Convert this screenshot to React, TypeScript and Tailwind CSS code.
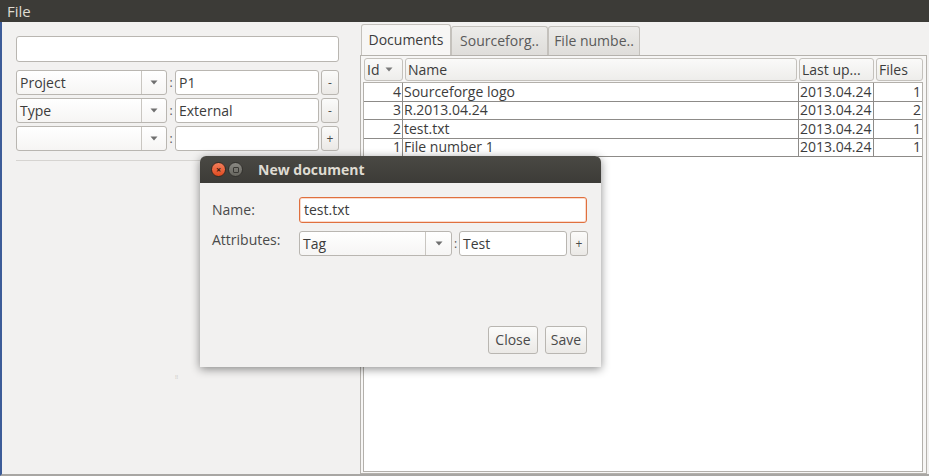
import React from "react";

const font = { fontFamily: '"Open Sans", "Noto Sans", "DejaVu Sans", sans-serif' };

function Arrow() {
  return (
    <svg width="8" height="5" viewBox="0 0 8 5">
      <path d="M0.5 0.5 L7.5 0.5 L4 4.5 Z" fill="#6f6f6f" />
    </svg>
  );
}

function Combo({ label, w, arrowW = 25 }: { label: string; w: number; arrowW?: number }) {
  return (
    <div
      className="flex h-[25px] rounded-[3px] border border-[#b9b6b1] bg-gradient-to-b from-white to-[#f6f5f4] overflow-hidden shrink-0"
      style={{ width: w }}
    >
      <div className="flex-1 flex items-center pl-[3px] text-[14px] text-[#3c3c3c] leading-none">{label}</div>
      <div className="flex items-center justify-center border-l border-[#c9c6c1]" style={{ width: arrowW }}>
        <Arrow />
      </div>
    </div>
  );
}

function Field({ value, w, className = "" }: { value: string; w: number; className?: string }) {
  return (
    <div
      className={`flex items-center h-[25px] rounded-[3px] border border-[#b9b6b1] bg-white pl-[3px] text-[14px] text-[#3c3c3c] leading-none shrink-0 ${className}`}
      style={{ width: w }}
    >
      {value}
    </div>
  );
}

function SmallBtn({ t }: { t: string }) {
  return (
    <div className="flex items-center justify-center w-[18px] h-[25px] rounded-[3px] border border-[#b9b6b1] bg-gradient-to-b from-[#fbfbfa] to-[#ebe9e6] text-[12px] text-[#4a4a4a] leading-none shrink-0">
      {t}
    </div>
  );
}

function AttrRow({ k, v, btn }: { k: string; v: string; btn: string }) {
  return (
    <div className="flex items-center">
      <Combo label={k} w={151} />
      <div className="w-[8px] text-center text-[12px] text-[#555] leading-none">:</div>
      <Field value={v} w={144} />
      <div className="w-[2px]" />
      <SmallBtn t={btn} />
    </div>
  );
}

const rows = [
  { id: "4", name: "Sourceforge logo", date: "2013.04.24", files: "1" },
  { id: "3", name: "R.2013.04.24", date: "2013.04.24", files: "2" },
  { id: "2", name: "test.txt", date: "2013.04.24", files: "1" },
  { id: "1", name: "File number 1", date: "2013.04.24", files: "1" },
];

function HeaderCell({ label, w, arrow }: { label: string; w: number; arrow?: boolean }) {
  return (
    <div
      className="flex items-center h-[23px] rounded-[3px] border border-[#c4c1bc] bg-gradient-to-b from-[#fafaf9] to-[#eeedeb] pl-[2px] text-[14px] text-[#3c3c3c] leading-none shrink-0 gap-[6px]"
      style={{ width: w }}
    >
      <span>{label}</span>
      {arrow && (
        <svg width="8" height="5" viewBox="0 0 8 5">
          <path d="M0.5 0.5 L7.5 0.5 L4 4.5 Z" fill="#7a7a7a" />
        </svg>
      )}
    </div>
  );
}

export default function App() {
  return (
    <div className="relative w-[929px] h-[476px] bg-[#f2f1f0] overflow-hidden" style={font}>
      {/* menu bar */}
      <div className="h-[22px] bg-[#3c3b37] flex items-center pl-[7px] text-[15px] text-[#dfdbd2] leading-none">
        File
      </div>
      <div className="flex h-[454px] border-l-2 border-[#3d5c98] border-b-2 border-b-[#a8a6a3]">
        {/* left panel */}
        <div className="w-[358px] shrink-0 pl-[14px] pt-[14px] relative">
          <div className="w-[323px] h-[26px] rounded-[3px] border border-[#b9b6b1] bg-white" />
          <div className="mt-[8px] flex flex-col gap-[3px]">
            <AttrRow k="Project" v="P1" btn="-" />
            <AttrRow k="Type" v="External" btn="-" />
            <AttrRow k="" v="" btn="+" />
          </div>
          <div className="mt-[9px] w-[323px] h-px bg-[#d6d4d1]" />
          <div className="absolute left-[173px] top-[352px] text-[6px] text-[#c8c6c3] leading-none">⁞⁞</div>
        </div>
        {/* right tab pane */}
        <div className="flex-1 flex flex-col pt-[3px] pr-[2px]">
          <div className="flex h-[30px] items-end pl-[1px]">
            <div className="h-[31px] w-[90px] flex items-center justify-center rounded-t-[3px] border border-b-0 border-[#c4c1bc] bg-[#f7f6f5] text-[14px] text-[#3c3c3c] leading-none">
              Documents
            </div>
            <div className="h-[29px] w-[97px] flex items-center justify-center rounded-t-[3px] border border-b-0 border-[#c4c1bc] bg-gradient-to-b from-[#ecebe9] to-[#dfddda] text-[14px] text-[#5a5a5a] leading-none">
              Sourceforg..
            </div>
            <div className="h-[29px] w-[92px] flex items-center justify-center rounded-t-[3px] border border-b-0 border-[#c4c1bc] bg-gradient-to-b from-[#ecebe9] to-[#dfddda] text-[14px] text-[#5a5a5a] leading-none">
              File numbe..
            </div>
          </div>
          <div className="flex-1 border border-[#b5b2ad] bg-[#f7f6f5] flex flex-col pt-[2px] pl-[2px] pr-[3px] pb-[1px]">
            <div className="flex gap-[2px] pl-px">
              <HeaderCell label="Id" w={39} arrow />
              <HeaderCell label="Name" w={392} />
              <HeaderCell label="Last up..." w={75} />
              <HeaderCell label="Files" w={47} />
            </div>
            <div className="flex-1 bg-white border border-[#b3b0ab] mt-[1px]">
              {rows.map((r) => (
                <div key={r.id} className="flex h-[18.5px] border-b border-[#8d8b88] text-[14px] text-[#3c3c3c] leading-none">
                  <div className="w-[39px] border-r border-[#8d8b88] flex items-center justify-end pr-px">{r.id}</div>
                  <div className="w-[396px] border-r border-[#8d8b88] flex items-center pl-px">{r.name}</div>
                  <div className="w-[75px] border-r border-[#8d8b88] flex items-center pl-px">{r.date}</div>
                  <div className="flex-1 flex items-center justify-end pr-px">{r.files}</div>
                </div>
              ))}
            </div>
          </div>
        </div>
      </div>

      {/* dialog */}
      <div className="absolute left-[200px] top-[156px] w-[401px] h-[211px] rounded-t-[6px] bg-[#f2f1f0] shadow-[0_2px_10px_rgba(0,0,0,0.45)] flex flex-col overflow-hidden">
        <div className="h-[27px] bg-gradient-to-b from-[#4a4944] to-[#3c3b37] flex items-center pl-[11px] shrink-0">
          <div className="w-[15px] h-[15px] rounded-full bg-gradient-to-b from-[#f47e5a] to-[#df4a1e] border border-[#3a2a22] flex items-center justify-center text-[9px] text-[#3a1a10] leading-none font-bold">
            ×
          </div>
          <div className="ml-[2px] w-[15px] h-[15px] rounded-full bg-gradient-to-b from-[#8a8983] to-[#67665f] border border-[#33322e] flex items-center justify-center">
            <div className="w-[6px] h-[6px] border border-[#3a3935] rounded-[1px]" />
          </div>
          <div className="ml-[15px] text-[14px] font-bold text-[#dfdbd2] leading-none">New document</div>
        </div>
        <div className="flex-1 flex flex-col px-[12px] pt-[14px] pb-[13px]">
          <div className="flex items-center">
            <div className="w-[87px] text-[14px] text-[#4a4a4a] leading-none">Name:</div>
            <div className="flex items-center w-[288px] h-[26px] rounded-[3px] border border-[#e0703e] bg-white pl-[4px] text-[14px] text-[#3c3c3c] leading-none shadow-[inset_0_0_0_1px_rgba(240,150,110,0.35)]">
              test.txt
            </div>
          </div>
          <div className="flex items-start mt-[8px]">
            <div className="w-[87px] text-[14px] text-[#4a4a4a] leading-none pt-[2px]">Attributes:</div>
            <div className="flex items-center">
              <Combo label="Tag" w={153} arrowW={26} />
              <div className="w-[7px] text-center text-[12px] text-[#555] leading-none">:</div>
              <Field value="Test" w={108} />
              <div className="w-[3px]" />
              <SmallBtn t="+" />
            </div>
          </div>
          <div className="flex-1" />
          <div className="flex justify-end gap-[7px] pr-[2px]">
            <div className="w-[50px] h-[28px] rounded-[3px] border border-[#b9b6b1] bg-gradient-to-b from-[#fbfbfa] to-[#ebe9e6] flex items-center justify-center text-[14px] text-[#4a4a4a] leading-none">
              Close
            </div>
            <div className="w-[42px] h-[28px] rounded-[3px] border border-[#b9b6b1] bg-gradient-to-b from-[#fbfbfa] to-[#ebe9e6] flex items-center justify-center text-[14px] text-[#4a4a4a] leading-none">
              Save
            </div>
          </div>
        </div>
      </div>
    </div>
  );
}
